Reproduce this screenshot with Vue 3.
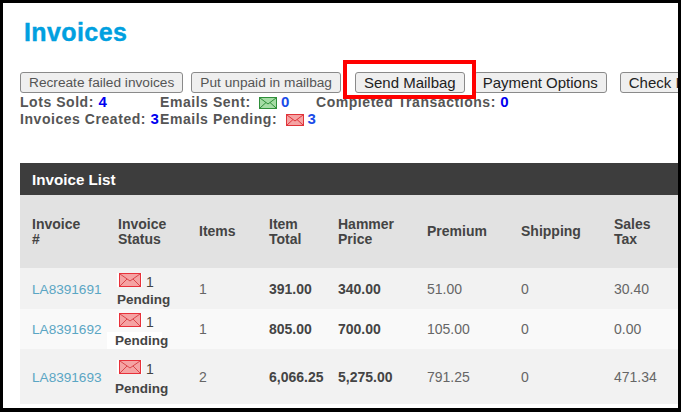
<script setup>
const rows = [
  { id: 'LA8391691', count: 1, items: 1, total: '391.00', hammer: '340.00', premium: '51.00', shipping: 0, tax: '30.40', cls: 'short first' },
  { id: 'LA8391692', count: 1, items: 1, total: '805.00', hammer: '700.00', premium: '105.00', shipping: 0, tax: '0.00', cls: 'short patched' },
  { id: 'LA8391693', count: 1, items: 2, total: '6,066.25', hammer: '5,275.00', premium: '791.25', shipping: 0, tax: '471.34', cls: 'tall' },
]
</script>

<template>
  <div class="frame">
    <div class="page">
      <h1>Invoices</h1>

      <div class="actions">
        <button class="muted">Recreate failed invoices</button>
        <button class="muted">Put unpaid in mailbag</button>
        <button class="send">Send Mailbag</button>
        <button class="options">Payment Options</button>
        <button class="check">Check Inbox</button>
      </div>

      <div class="stats">
        <div>Lots Sold: <b class="pure">4</b></div>
        <div>Emails Sent:
          <svg class="mail-sm" viewBox="0 0 18 12"><rect x=".5" y=".5" width="17" height="11" fill="#a5dca5" stroke="#2f8f3a" /><path d="M1 1l8 6 8-6M1 11l6-5.5M17 11l-6-5.5" fill="none" stroke="#2f8f3a" /></svg>
          <b>0</b></div>
        <div>Completed Transactions: <b class="pure">0</b></div>
        <div>Invoices Created: <b class="pure">3</b></div>
        <div>Emails Pending:
          <svg class="mail-sm" viewBox="0 0 18 12"><rect x=".5" y=".5" width="17" height="11" fill="#f5a3a3" stroke="#e0343a" /><path d="M1 1l8 6 8-6M1 11l6-5.5M17 11l-6-5.5" fill="none" stroke="#e0343a" /></svg>
          <b>3</b></div>
      </div>

      <section class="list">
        <h2>Invoice List</h2>
        <table>
          <thead>
            <tr>
              <th class="c1">Invoice<br>#</th>
              <th class="c2">Invoice Status</th>
              <th class="c3">Items</th>
              <th class="c4">Item Total</th>
              <th class="c5">Hammer Price</th>
              <th class="c6">Premium</th>
              <th class="c7">Shipping</th>
              <th class="c8">Sales Tax</th>
            </tr>
          </thead>
          <tbody>
            <tr v-for="row in rows" :key="row.id" :class="row.cls">
              <td><a>{{ row.id }}</a></td>
              <td class="status">
                <div class="sent-line">
                  <span class="icon-patch">
                    <svg class="mail" viewBox="0 0 22 14"><rect x=".5" y=".5" width="21" height="13" fill="#f5a3a3" stroke="#e8313a" /><path d="M1 1l10 7 10-7M1 13l7-7M21 13l-7-7" fill="none" stroke="#d9454a" /></svg>
                  </span>
                  {{ row.count }}
                </div>
                <div class="pending">Pending</div>
              </td>
              <td>{{ row.items }}</td>
              <td><b>{{ row.total }}</b></td>
              <td><b>{{ row.hammer }}</b></td>
              <td>{{ row.premium }}</td>
              <td>{{ row.shipping }}</td>
              <td>{{ row.tax }}</td>
            </tr>
          </tbody>
        </table>
      </section>

      <div class="highlight"></div>
    </div>
  </div>
</template>

<style scoped>
.frame {
  width: 681px;
  height: 412px;
  box-sizing: border-box;
  border: solid #000;
  border-width: 3px 3px 4px 3px;
  background: #fff;
  overflow: hidden;
  font-family: "Liberation Sans", Arial, sans-serif;
}

.page {
  position: relative;
  padding: 16px 0 0 17px;
}

h1 {
  margin: 0 0 0 4px;
  font-size: 25px;
  line-height: 27px;
  font-weight: bold;
  letter-spacing: .4px;
  color: #00a0e0;
  -webkit-text-stroke: .4px #00a0e0;
}

.actions {
  display: flex;
  gap: 8px;
  margin-top: 26px;
  height: 21px;
}

button {
  flex-shrink: 0;
  height: 21px;
  padding: 0 8px;
  border: 1px solid #8a8a8a;
  border-radius: 3px;
  background: #efefef;
  font-family: inherit;
  font-size: 15px;
  color: #222;
  white-space: nowrap;
}

button.muted {
  color: #555;
  font-size: 13.7px;
}

.send {
  margin-left: 6px;
}

.options {
  margin-left: 1px;
}

.check {
  margin-left: 5px;
}

.stats {
  display: grid;
  grid-template-columns: 140px 156px auto;
  grid-auto-rows: 17px;
  margin-top: 1px;
  font-size: 14px;
  line-height: 17px;
  font-weight: bold;
  color: #555;
  letter-spacing: .55px;
  white-space: nowrap;
}

.stats b {
  color: #1a4be8;
  font-size: 15px;
  line-height: 1;
  letter-spacing: 0;
}

.stats b.pure {
  color: #0000f0;
}

.mail-sm {
  width: 18px;
  height: 12px;
  margin: 0 4px 0 4px;
  vertical-align: -2px;
}

.list {
  margin-top: 35px;
}

h2 {
  margin: 0;
  height: 32px;
  padding-left: 12px;
  background: #3d3d3d;
  color: #fff;
  font-size: 15.2px;
  line-height: 34px;
  font-weight: bold;
}

table {
  border-collapse: collapse;
  table-layout: fixed;
  width: 658px;
  font-size: 14px;
  color: #666;
}

th, td {
  padding: 0 12px;
  text-align: left;
  vertical-align: middle;
}

th {
  height: 73px;
  background: #e2e2e2;
  color: #444;
  font-size: 14px;
  line-height: 15px;
  box-sizing: border-box;
}

.c1 { width: 86px; }
.c2 { width: 81px; }
.c3 { width: 70px; }
.c4 { width: 69px; }
.c5 { width: 89px; }
.c6 { width: 94px; }
.c7 { width: 93px; }
.c8 { width: 76px; }

td b {
  color: #444;
}

tbody tr {
  background: #f2f2f2;
}

tbody tr.first {
  height: 41px;
}

tbody tr.patched {
  height: 40px;
  background: #f9f9f9;
}

tbody tr.tall {
  height: 55px;
}

a {
  color: #5ba6c4;
  font-size: 13.6px;
}

.status {
  padding: 4px 0 0 12px;
  color: #444;
}

.sent-line {
  line-height: 17px;
  margin-left: -1px;
  white-space: nowrap;
}

.icon-patch {
  display: inline-block;
  background: #fff;
  padding: 0 1px 0 2px;
  line-height: 0;
}

.mail {
  width: 22px;
  height: 14px;
}

.pending {
  font-weight: bold;
  font-size: 13.5px;
  line-height: 17px;
  margin-left: -3px;
  white-space: nowrap;
}

.first .pending {
  margin-left: -1px;
}

.tall .pending {
  margin-top: 2px;
}

.patched .pending {
  background: #fff;
  margin-top: 1px;
  margin-left: -11px;
  margin-right: 25px;
  padding-left: 8px;
}

.highlight {
  position: absolute;
  left: 340px;
  top: 57px;
  width: 125px;
  height: 31px;
  border: 4px solid #f00;
  pointer-events: none;
}
</style>

<style>
html, body {
  background: #fff;
}
</style>
